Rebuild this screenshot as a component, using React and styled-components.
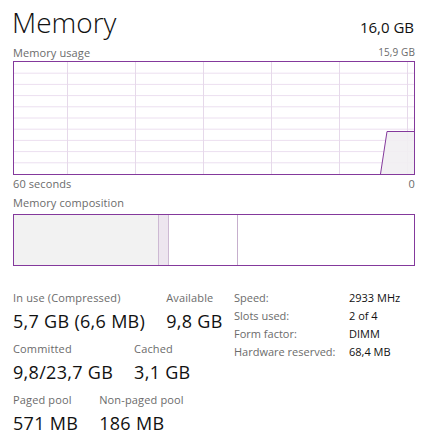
import styled, { createGlobalStyle } from "styled-components";

const GlobalStyle = createGlobalStyle`
  html, body {
    margin: 0;
    padding: 0;
    background: #ffffff;
  }
  body {
    font-family: "Open Sans", "Noto Sans", sans-serif;
    color: #000;
  }
`;

const PURPLE = "#84399c";
const GRID = "#ecdff0";

const Panel = styled.div`
  width: 427px;
  height: 441px;
  box-sizing: border-box;
  padding: 5px 12px 0 13px;
  overflow: hidden;
`;

const Header = styled.div`
  display: flex;
  justify-content: space-between;
  align-items: baseline;
  height: 34px;
`;

const Title = styled.h1`
  margin: 0 0 0 -1px;
  font-size: 28px;
  line-height: 34px;
  font-weight: 300;
  color: #111;
`;

const Total = styled.span`
  font-size: 15px;
  font-weight: 400;
  color: #111;
  margin-right: 1px;
`;

const LabelRow = styled.div`
  display: flex;
  justify-content: space-between;
  font-size: 11px;
  line-height: 13px;
  color: #6b6b6b;
  letter-spacing: 0.1px;
  margin-top: ${(p) => p.$top || 0}px;
  & span:last-child {
    font-size: ${(p) => (p.$small ? 10 : 11)}px;
  }
`;

const ChartFrame = styled.div`
  margin-top: 2px;
  height: 114px;
  box-sizing: border-box;
  border: 1px solid ${PURPLE};
  & svg {
    display: block;
  }
`;

const CompositionBar = styled.div`
  margin-top: 5px;
  height: 52px;
  box-sizing: border-box;
  border: 1px solid ${PURPLE};
  display: flex;
`;

const Segment = styled.div`
  flex: ${(p) => (p.$grow ? 1 : "none")};
  background: ${(p) => p.$fill || "transparent"};
  border-right: ${(p) => (p.$line ? `1px solid ${p.$line}` : "none")};
`;

const Stats = styled.div`
  display: flex;
  margin-top: 25px;
`;

const LeftStats = styled.div`
  width: 221px;
  display: flex;
  flex-direction: column;
  gap: 10px;
`;

const StatRow = styled.div`
  display: flex;
  gap: 21px;
`;

const Stat = styled.div`
  display: flex;
  flex-direction: column;
  gap: 6px;
  white-space: nowrap;
`;

const StatLabel = styled.span`
  font-size: 11px;
  line-height: 13px;
  color: #6b6b6b;
  letter-spacing: 0.15px;
`;

const StatValue = styled.span`
  font-size: 18px;
  line-height: 22px;
  color: #111;
  letter-spacing: 0.3px;
`;

const InfoGrid = styled.div`
  display: grid;
  grid-template-columns: 115px auto;
  grid-auto-rows: 18px;
  font-size: 11px;
  line-height: 18px;
  margin-top: -2px;
  white-space: nowrap;
`;

const InfoLabel = styled.span`
  color: #6b6b6b;
`;

const InfoValue = styled.span`
  color: #111;
`;

const W = 400;
const H = 112;

const UsageChart = () => {
  const rows = Array.from({ length: 9 }, (_, i) => ((i + 1) * H) / 10);
  const cols = [53, 121, 189, 257, 325, 393];
  return (
    <svg width={W} height={H} viewBox={`0 0 ${W} ${H}`}>
      {rows.map((y) => (
        <line key={y} x1="0" x2={W} y1={y} y2={y} stroke={GRID} strokeWidth="1" />
      ))}
      {cols.map((x) => (
        <line key={x} x1={x + 0.5} x2={x + 0.5} y1="0" y2={H} stroke="#e6d9ea" strokeWidth="1" />
      ))}
      <polygon points={`366.5,${H} 373,69.5 ${W},69.5 ${W},${H}`} fill="#f1eef2" fillOpacity="0.9" />
      <polyline points={`366.5,${H} 373,69.5 ${W},69.5`} fill="none" stroke={PURPLE} strokeWidth="1" />
    </svg>
  );
};

const composition = [
  { width: 144, fill: "#f2f2f2", line: "#cdb9d3" },
  { width: 9, fill: "#ede6ef", line: "#cdb9d3" },
  { width: 68, fill: "#fff", line: "#c6afcd" },
];

const App = () => (
  <>
    <GlobalStyle />
    <Panel>
      <Header>
        <Title>Memory</Title>
        <Total>16,0 GB</Total>
      </Header>
      <LabelRow $top={7} $small>
        <span>Memory usage</span>
        <span>15,9 GB</span>
      </LabelRow>
      <ChartFrame>
        <UsageChart />
      </ChartFrame>
      <LabelRow $top={2}>
        <span>60 seconds</span>
        <span>0</span>
      </LabelRow>
      <LabelRow $top={6}>
        <span>Memory composition</span>
      </LabelRow>
      <CompositionBar>
        {composition.map((s, i) => (
          <Segment key={i} $fill={s.fill} $line={s.line} style={{ width: s.width }} />
        ))}
        <Segment $grow />
      </CompositionBar>
      <Stats>
        <LeftStats>
          <StatRow>
            <Stat>
              <StatLabel>In use (Compressed)</StatLabel>
              <StatValue>5,7 GB (6,6 MB)</StatValue>
            </Stat>
            <Stat>
              <StatLabel>Available</StatLabel>
              <StatValue>9,8 GB</StatValue>
            </Stat>
          </StatRow>
          <StatRow>
            <Stat>
              <StatLabel>Committed</StatLabel>
              <StatValue>9,8/23,7 GB</StatValue>
            </Stat>
            <Stat>
              <StatLabel>Cached</StatLabel>
              <StatValue>3,1 GB</StatValue>
            </Stat>
          </StatRow>
          <StatRow>
            <Stat>
              <StatLabel>Paged pool</StatLabel>
              <StatValue>571 MB</StatValue>
            </Stat>
            <Stat>
              <StatLabel>Non-paged pool</StatLabel>
              <StatValue>186 MB</StatValue>
            </Stat>
          </StatRow>
        </LeftStats>
        <InfoGrid>
          <InfoLabel>Speed:</InfoLabel>
          <InfoValue>2933 MHz</InfoValue>
          <InfoLabel>Slots used:</InfoLabel>
          <InfoValue>2 of 4</InfoValue>
          <InfoLabel>Form factor:</InfoLabel>
          <InfoValue>DIMM</InfoValue>
          <InfoLabel>Hardware reserved:</InfoLabel>
          <InfoValue>68,4 MB</InfoValue>
        </InfoGrid>
      </Stats>
    </Panel>
  </>
);

export default App;
